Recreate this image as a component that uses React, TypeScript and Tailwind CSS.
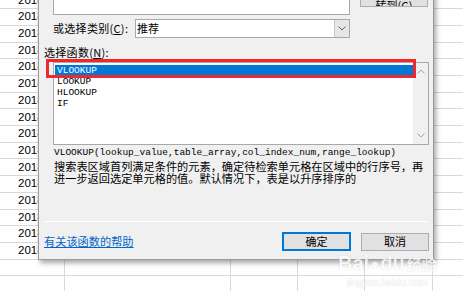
import React from "react";

const colWidths = [65, 166, 67, 67, 68, 40];
const rows = Array.from({ length: 18 }, (_, i) => i);

function SheetRow({ i }: { i: number }) {
  return (
    <div className="flex h-[16.7px] shrink-0 border-b border-[#d9d9d9]">
      {colWidths.map((w, c) => (
        <div
          key={c}
          style={{ width: w }}
          className="shrink-0 border-r border-[#d9d9d9] h-full flex items-center"
        >
          {c === 0 && i < 16 ? (
            <span className="pl-[18px] text-[11.5px] text-black leading-none font-['Liberation_Sans',sans-serif]">
              2018
            </span>
          ) : null}
        </div>
      ))}
    </div>
  );
}

export default function App() {
  const cjk = "font-['Noto_Sans_CJK_SC','Noto_Sans',sans-serif]";
  const mono = "font-['Liberation_Mono','Noto_Sans_CJK_SC',monospace]";
  return (
    <div className="relative w-[463px] h-[291px] overflow-hidden bg-white">
      {/* spreadsheet */}
      <div className="flex flex-col mt-[-7.4px]">
        {rows.map((i) => (
          <SheetRow key={i} i={i} />
        ))}
      </div>

      {/* dialog */}
      <div
        className={`absolute left-[38px] top-[-30px] w-[396px] h-[290px] bg-[#f0f0f0] border border-[#9b9b9b] shadow-[2px_3px_5px_rgba(0,0,0,0.35)] flex flex-col text-black ${cjk}`}
      >
        {/* search row */}
        <div className="flex items-start pl-[14px] pt-[11px] gap-[10px]">
          <div className="w-[297px] h-[33px] bg-white border border-[#a8a8a8] relative overflow-hidden">
            <span className="absolute left-[6px] bottom-[14px] text-[11px] leading-none text-black">
              转到”
            </span>
          </div>
          <div className="w-[68px] h-[22px] mt-[3px] bg-[#e1e1e1] border border-[#adadad] flex items-end justify-center overflow-hidden">
            <span className="text-[11px] leading-[12px] mb-[-5px]">转到(G)</span>
          </div>
        </div>

        {/* category row */}
        <div className="flex items-center pl-[14px] mt-[4px] h-[19px]">
          <span className="w-[82px] text-[11px] leading-none tracking-[0.3px]">
            或选择类别(<span className="underline">C</span>):
          </span>
          <div className="w-[215px] h-[19px] bg-white border border-[#a8a8a8] flex items-stretch">
            <span className="flex-1 text-[11px] leading-[17px] pl-[1px]">推荐</span>
            <div className="w-[15px] bg-[#e6e6e6] border-l border-[#c8c8c8] flex items-center justify-center">
              <svg width="8" height="5" viewBox="0 0 8 5">
                <path d="M0.5 0.5 L4 4 L7.5 0.5" fill="none" stroke="#606060" strokeWidth="1" />
              </svg>
            </div>
          </div>
        </div>

        {/* function label */}
        <div className="pl-[5px] mt-[8px] h-[12px] text-[11px] leading-[12px] tracking-[0.3px]">
          选择函数(<span className="underline">N</span>):
        </div>

        {/* list box */}
        <div className="ml-[14px] mt-[4px] w-[376px] h-[83px] bg-white border border-[#a8a8a8] flex">
          <div className={`flex-1 flex flex-col pt-[2px] pl-[1px] ${mono} text-[9.5px]`}>
            <div className="h-[11px] bg-[#0078d7] text-white leading-[11px] pl-[2px]">VLOOKUP</div>
            <div className="h-[11px] leading-[11px] pl-[2px]">LOOKUP</div>
            <div className="h-[11px] leading-[11px] pl-[2px]">HLOOKUP</div>
            <div className="h-[11px] leading-[11px] pl-[2px]">IF</div>
          </div>
          <div className="w-[15px] bg-[#f0f0f0] flex flex-col justify-between items-center py-[6px]">
            <svg width="8" height="5" viewBox="0 0 8 5">
              <path d="M0.5 4.5 L4 1 L7.5 4.5" fill="none" stroke="#a0a0a0" strokeWidth="1" />
            </svg>
            <svg width="8" height="5" viewBox="0 0 8 5">
              <path d="M0.5 0.5 L4 4 L7.5 0.5" fill="none" stroke="#a0a0a0" strokeWidth="1" />
            </svg>
          </div>
        </div>

        {/* syntax */}
        <div className={`pl-[15px] mt-[2px] h-[11px] leading-[11px] text-[9.5px] ${mono}`}>
          VLOOKUP(lookup_value,table_array,col_index_num,range_lookup)
        </div>

        {/* description */}
        <div className="pl-[15px] pr-[4px] mt-[3px] text-[11.2px] leading-[11.5px]">
          <div className="whitespace-nowrap">搜索表区域首列满足条件的元素，确定待检索单元格在区域中的行序号，再</div>
          <div className="whitespace-nowrap">进一步返回选定单元格的值。默认情况下，表是以升序排序的</div>
        </div>

        {/* separator */}
        <div className="mx-[5px] mt-[37px] h-[1px] bg-[#d6d6d6] border-b border-white" />

        {/* bottom row */}
        <div className="flex items-center pl-[5px] pr-[4px] mt-[10px] h-[19px]">
          <a className="text-[11.2px] leading-none text-[#0066cc] underline">有关该函数的帮助</a>
          <div className="flex-1" />
          <div className="w-[69px] h-[19px] bg-[#e1e1e1] border-2 border-[#0078d7] flex items-center justify-center text-[11px]">
            确定
          </div>
          <div className="w-[68px] h-[18px] ml-[10px] bg-[#e1e1e1] border border-[#adadad] flex items-center justify-center text-[11px]">
            取消
          </div>
        </div>
      </div>

      {/* red annotation */}
      <div className="absolute left-[46px] top-[59px] w-[370px] h-[19px] border-[3px] border-[#f0282d]" />

      {/* watermark */}
      <div className="absolute left-[338px] top-[253px] flex flex-col items-center text-white opacity-75 pointer-events-none">
        <div className="flex items-center text-[20px] font-bold leading-none [text-shadow:0_0_1px_rgba(0,0,0,0.25)] font-['Liberation_Sans',sans-serif]">
          <span>Bai</span>
          <span className="mx-[1px] text-[15px]">●</span>
          <span>du</span>
          <span className={`ml-[2px] text-[15px] ${cjk}`}>经验</span>
        </div>
        <div className="text-[10px] leading-none mt-[5px] [text-shadow:0_0_1px_rgba(0,0,0,0.25)] font-['Liberation_Sans',sans-serif]">
          jingyan.baidu.com
        </div>
      </div>
    </div>
  );
}
